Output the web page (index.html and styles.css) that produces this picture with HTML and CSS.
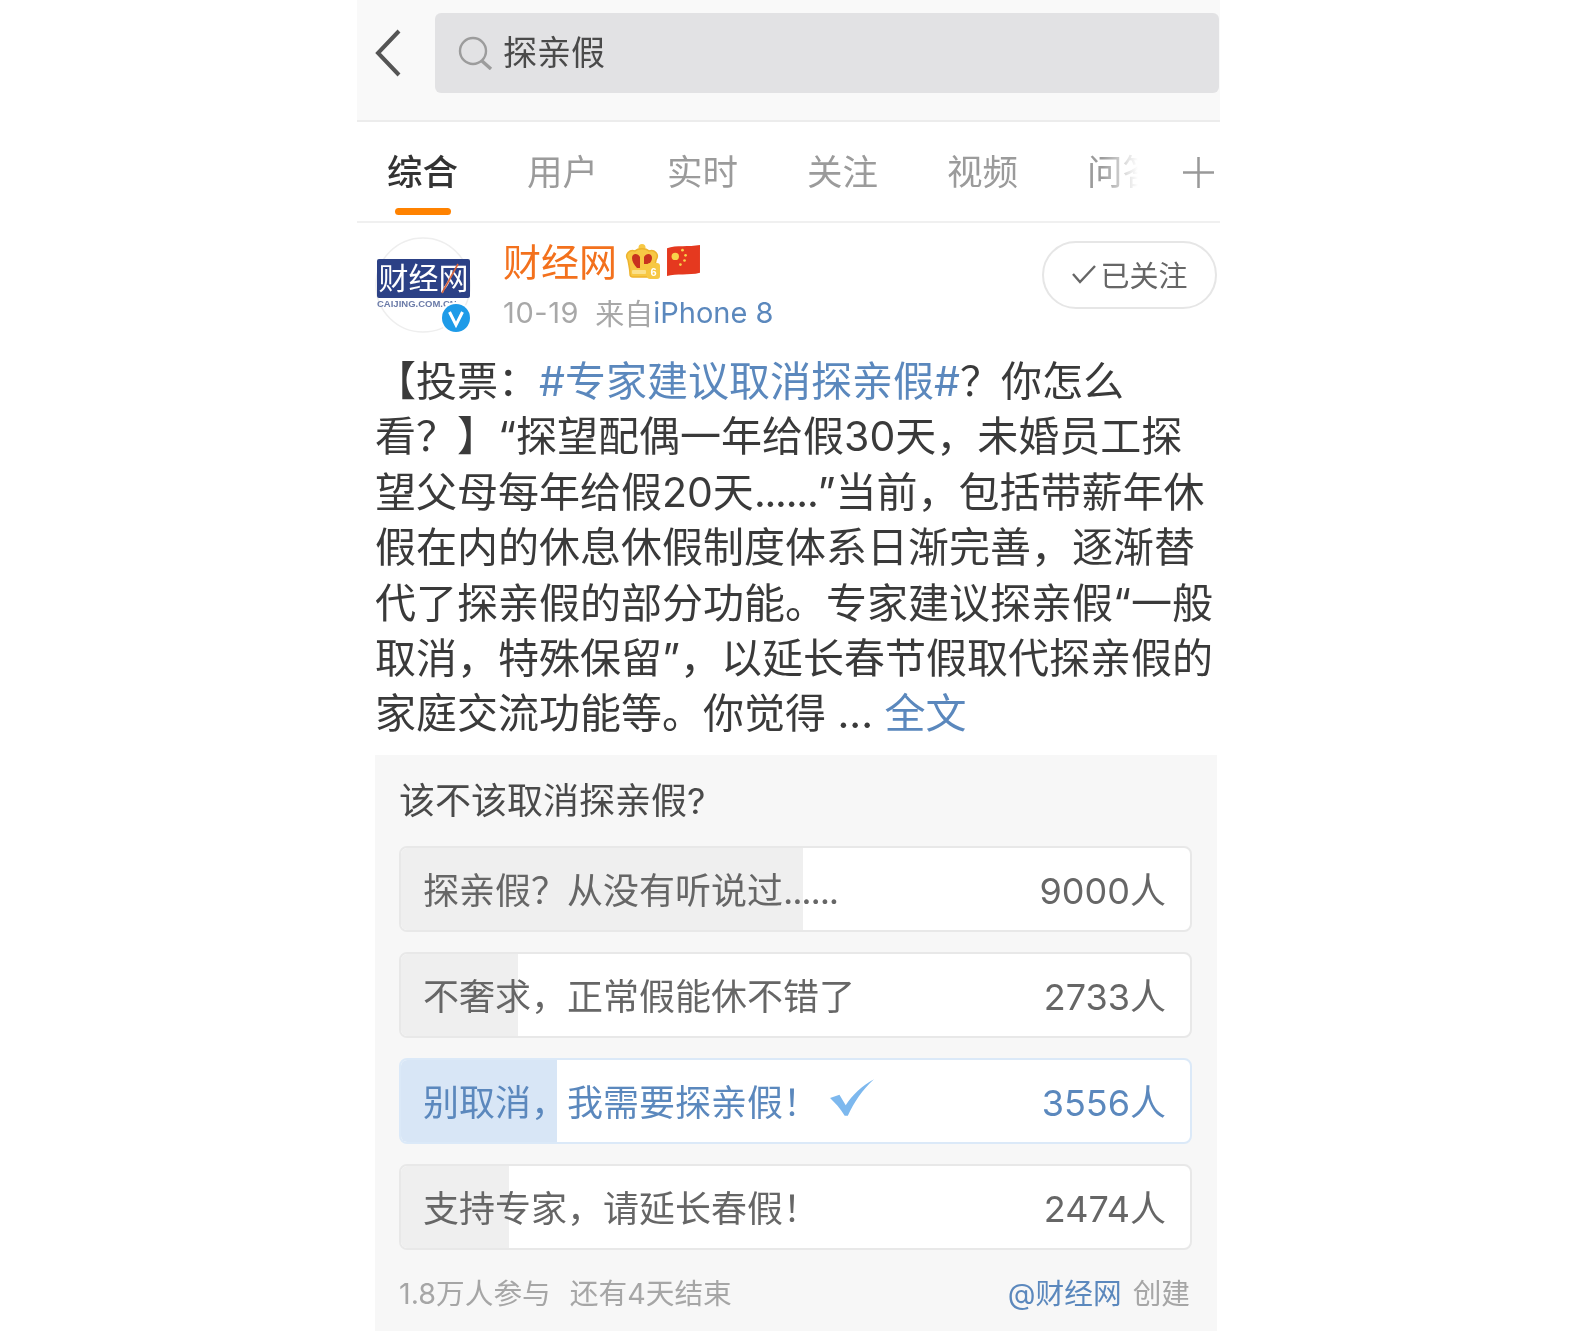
FILE: index.html
```html
<!DOCTYPE html>
<html lang="zh">
<head>
<meta charset="utf-8">
<title>探亲假</title>
<link rel="stylesheet" href="styles.css">
</head>
<body>
<div class="phone">
  <header class="search-bar">
    <svg class="back" viewBox="0 0 28 48"><path d="M25 2 L4 24 L25 46" fill="none" stroke="#555" stroke-width="4"/></svg>
    <div class="search-box">
      <svg class="search-icon" viewBox="0 0 36 34"><circle cx="15" cy="15" r="13" fill="none" stroke="#9c9c9c" stroke-width="2.4"/><path d="M24 25 L33 33" stroke="#9c9c9c" stroke-width="3.4" fill="none"/></svg>
      <span class="search-text">探亲假</span>
    </div>
  </header>
  <nav class="tabs">
    <span class="tab active">综合</span>
    <span class="tab">用户</span>
    <span class="tab">实时</span>
    <span class="tab">关注</span>
    <span class="tab">视频</span>
    <span class="tab">问答</span>
    <div class="tab-plus">
      <svg class="plus" viewBox="0 0 32 32"><path d="M0 16H32M16 0V32" stroke="#999" stroke-width="2.6" fill="none"/></svg>
    </div>
  </nav>
  <section class="post-head">
    <div class="avatar">
      <svg viewBox="0 0 96 96" class="avatar-svg">
        <circle cx="48" cy="48" r="47" fill="#fff" stroke="#eee" stroke-width="1.5"/>
        <rect x="2" y="22" width="93" height="39" rx="2" fill="#2c4186"/>
        <text x="48.5" y="52" text-anchor="middle" class="logo-cn">财经网</text>
        <path d="M67 56 L83 27" stroke="#d8663f" stroke-width="1.6" fill="none"/>
        <text x="2" y="70" class="logo-en">CAIJING.COM.CN</text>
      </svg>
      <svg class="badge" viewBox="0 0 32 32"><circle cx="16" cy="16" r="16" fill="#fff"/><circle cx="16" cy="16" r="14" fill="#1e9be8"/><path d="M9.5 10 L16 23 L22.5 10" fill="none" stroke="#fff" stroke-width="3"/></svg>
    </div>
    <div class="meta">
      <div class="name-row">
        <span class="name">财经网</span>
        <svg class="crown" viewBox="0 0 37 36">
          <circle cx="18" cy="4.5" r="3.5" fill="#f7c844"/>
          <path d="M4 17 C0 11 6 6 11 8 C14 5 22 5 25 8 C30 6 36 11 32 17 C31 22 30 27 30 31 C30 33 29 34 27 34 H9 C7 34 6 33 6 31 C6 27 5 22 4 17Z" fill="#f7c844" stroke="#eeb32e" stroke-width="1.5"/>
          <path d="M8 15 C8 10 14 10 16 14 V25 H13 C10 22 8 18 8 15Z M20 14 C22 10 28 10 28 15 C28 17 27 19 25 21 H20Z" fill="#c8321f"/>
          <rect x="8" y="27" width="14" height="4" rx="1" fill="#fbe08a"/>
          <rect x="23" y="20" width="13" height="16" rx="3" fill="#f7c844"/>
          <text x="29.5" y="33" text-anchor="middle" class="crown-num">6</text>
        </svg>
        <svg class="flag" viewBox="0 0 34 32">
          <path d="M1 4 C10 1 22 3 33 1 V28 C22 31 10 28 1 31Z" fill="#e5391f"/>
          <circle cx="9" cy="12" r="3.6" fill="#f8d34a"/>
          <circle cx="16" cy="6" r="1.3" fill="#f8d34a"/><circle cx="19" cy="11" r="1.3" fill="#f8d34a"/><circle cx="18" cy="16" r="1.3" fill="#f8d34a"/><circle cx="14" cy="20" r="1.3" fill="#f8d34a"/>
        </svg>
      </div>
      <div class="sub-row"><span class="date">10-19</span><span class="from">来自</span><span class="link">iPhone 8</span></div>
    </div>
    <button class="follow">
      <svg class="follow-check" viewBox="0 0 26 22"><path d="M2 11 L9 19 L24 3" fill="none" stroke="#666" stroke-width="2.4"/></svg>
      <span>已关注</span>
    </button>
  </section>
  <p class="body-text">【投票：<span class="link">#专家建议取消探亲假#</span>？你怎么<br>看？】“探望配偶一年给假30天，未婚员工探<br>望父母每年给假20天<span class="dots">......</span>”当前，包括带薪年休<br>假在内的休息休假制度体系日渐完善，逐渐替<br>代了探亲假的部分功能。专家建议探亲假“一般<br>取消，特殊保留”，以延长春节假取代探亲假的<br>家庭交流功能等。你觉得 ... <span class="link">全文</span></p>
  <section class="poll">
    <h2 class="poll-title">该不该取消探亲假?</h2>
    <div class="options">
      <div class="option">
        <div class="fill" style="width:402px"></div>
        <span class="opt-label">探亲假？从没有听说过<span class="dots">......</span></span>
        <span class="opt-count">9000人</span>
      </div>
      <div class="option">
        <div class="fill" style="width:117px"></div>
        <span class="opt-label">不奢求，正常假能休不错了</span>
        <span class="opt-count">2733人</span>
      </div>
      <div class="option selected">
        <div class="fill" style="width:156px"></div>
        <span class="opt-label">别取消，我需要探亲假！</span>
        <svg class="opt-check" viewBox="0 0 44 36"><path d="M1 18 L10 15 L16 25 C22 15 32 6 43 0 C32 10 24 22 18 35 L15 35 C11 28 6 23 1 18Z" fill="#7db8ee"/></svg>
        <span class="opt-count">3556人</span>
      </div>
      <div class="option">
        <div class="fill" style="width:108px"></div>
        <span class="opt-label">支持专家，请延长春假！</span>
        <span class="opt-count">2474人</span>
      </div>
    </div>
    <footer class="poll-foot">
      <span class="foot-left"><span>1.8万人参与</span><span>还有4天结束</span></span>
      <span class="foot-right"><span class="link">@财经网</span><span>创建</span></span>
    </footer>
  </section>
</div>
</body>
</html>
```

FILE: styles.css
```css
* { box-sizing: border-box; }
html, body { margin: 0; padding: 0; background: #fff; }
body {
  font-family: Inter, "Noto Sans CJK SC", sans-serif;
  color: #3a3a3a;
  width: 1596px;
  height: 1331px;
  overflow: hidden;
}
.phone {
  width: 863px;
  height: 1331px;
  margin-left: 357px;
  overflow: hidden;
  background: #fff;
  filter: blur(0.7px);
}
.link { color: #5b88bd; }

.search-bar {
  height: 122px;
  background: #f9f9f9;
  border-bottom: 2px solid #ececec;
  padding: 13px 1px 0 17px;
  display: flex;
  align-items: flex-start;
}
.back { width: 28px; height: 48px; margin-top: 16px; flex: none; }
.search-box {
  margin-left: 33px;
  flex: 1;
  height: 80px;
  background: #e2e2e4;
  border-radius: 6px;
  display: flex;
  align-items: center;
  padding-left: 23px;
}
.search-icon { width: 36px; height: 34px; flex: none; }
.search-text { font-size: 34px; margin-left: 9px; color: #4a4a4a; line-height: 1; }

.tabs {
  position: relative;
  height: 101px;
  border-bottom: 2px solid #f0f0f0;
  display: flex;
  gap: 69px;
  padding: 31px 0 0 30px;
  overflow: hidden;
  white-space: nowrap;
}
.tab {
  position: relative;
  font-size: 35.5px;
  line-height: 40px;
  color: #9b9b9b;
  flex: none;
}
.tab.active { color: #333; font-weight: 500; }
.tab.active::after {
  content: "";
  position: absolute;
  left: 8px;
  top: 55px;
  width: 56px;
  height: 7px;
  border-radius: 4px;
  background: #ff8200;
}
.tab-plus {
  position: absolute;
  right: 0;
  top: 0;
  bottom: 0;
  width: 118px;
  background: linear-gradient(to right, rgba(255,255,255,0) 0, #fff 36px);
  display: flex;
  justify-content: flex-end;
  padding: 35px 6px 0 0;
}
.plus { width: 31px; height: 31px; }

.post-head {
  height: 131px;
  padding: 14px 3px 0 18px;
  display: flex;
  align-items: flex-start;
}
.avatar { position: relative; width: 96px; height: 96px; flex: none; }
.avatar-svg { width: 96px; height: 96px; display: block; }
.logo-cn { font-size: 30px; fill: #fff; font-family: "Noto Sans CJK SC", sans-serif; }
.logo-en { font-size: 9.5px; fill: #6b7ba8; font-family: "Liberation Sans", sans-serif; font-weight: 700; }
.badge { position: absolute; right: -1px; bottom: -1px; width: 32px; height: 32px; }
.meta { margin-left: 32px; flex: 1; padding-top: 1px; }
.name-row { display: flex; align-items: center; height: 48px; }
.name { font-size: 38px; line-height: 48px; color: #f3711d; }
.crown { width: 37px; height: 36px; margin-left: 7px; margin-top: -3px; }
.crown-num { font-size: 11px; font-weight: 700; fill: #fff; font-family: "Liberation Sans", sans-serif; }
.flag { width: 35px; height: 33px; margin-left: 5px; margin-top: -3px; }
.sub-row { display: flex; align-items: center; height: 40px; margin-top: 6px; font-size: 29px; color: #a8a8a8; }
.date { margin-right: 16px; letter-spacing: 0.6px; }
.follow {
  margin-top: 4px;
  width: 175px;
  height: 68px;
  border: 2px solid #e6e6e6;
  border-radius: 34px;
  background: #fff;
  display: flex;
  align-items: center;
  justify-content: center;
  padding: 0 0 2px;
  font-family: inherit;
  font-size: 29px;
  color: #666;
}
.follow-check { width: 26px; height: 22px; margin-right: 3px; }

.body-text {
  margin: 0;
  padding: 0 0 0 18px;
  font-size: 41px;
  line-height: 55.4px;
  color: #3a3a3a;
  white-space: nowrap;
}
.dots { letter-spacing: -1.2px; }

.poll {
  margin: 13px 3px 0 18px;
  height: 600px;
  background: #f7f7f7;
  padding: 23px 25px 0 24px;
}
.poll-title { margin: 0 0 22px; font-size: 36px; font-weight: 400; line-height: 46px; color: #4a4a4a; }
.options { display: flex; flex-direction: column; gap: 20px; }
.option {
  position: relative;
  height: 86px;
  border: 2px solid #e8e8e8;
  border-radius: 8px;
  background: #fff;
  display: flex;
  align-items: center;
  padding: 0 24px 2px 22px;
  overflow: hidden;
  font-size: 36px;
  color: #666;
}
.fill { position: absolute; left: 0; top: 0; bottom: 0; background: #efefef; }
.opt-label, .opt-count, .opt-check { position: relative; }
.opt-count { margin-left: auto; }
.option.selected { border-color: #dbe9f8; color: #5b88bd; }
.selected .fill { background: #d8e6f6; }
.opt-check { width: 46px; height: 38px; margin-left: 10px; margin-top: -4px; }
.poll-foot {
  display: flex;
  justify-content: space-between;
  align-items: center;
  margin-top: 21px;
  margin-right: 2px;
  font-size: 28.7px;
  line-height: 46px;
  color: #a6a6a6;
}
.foot-left, .foot-right { display: flex; gap: 19px; }
.foot-right { gap: 11px; }
```
